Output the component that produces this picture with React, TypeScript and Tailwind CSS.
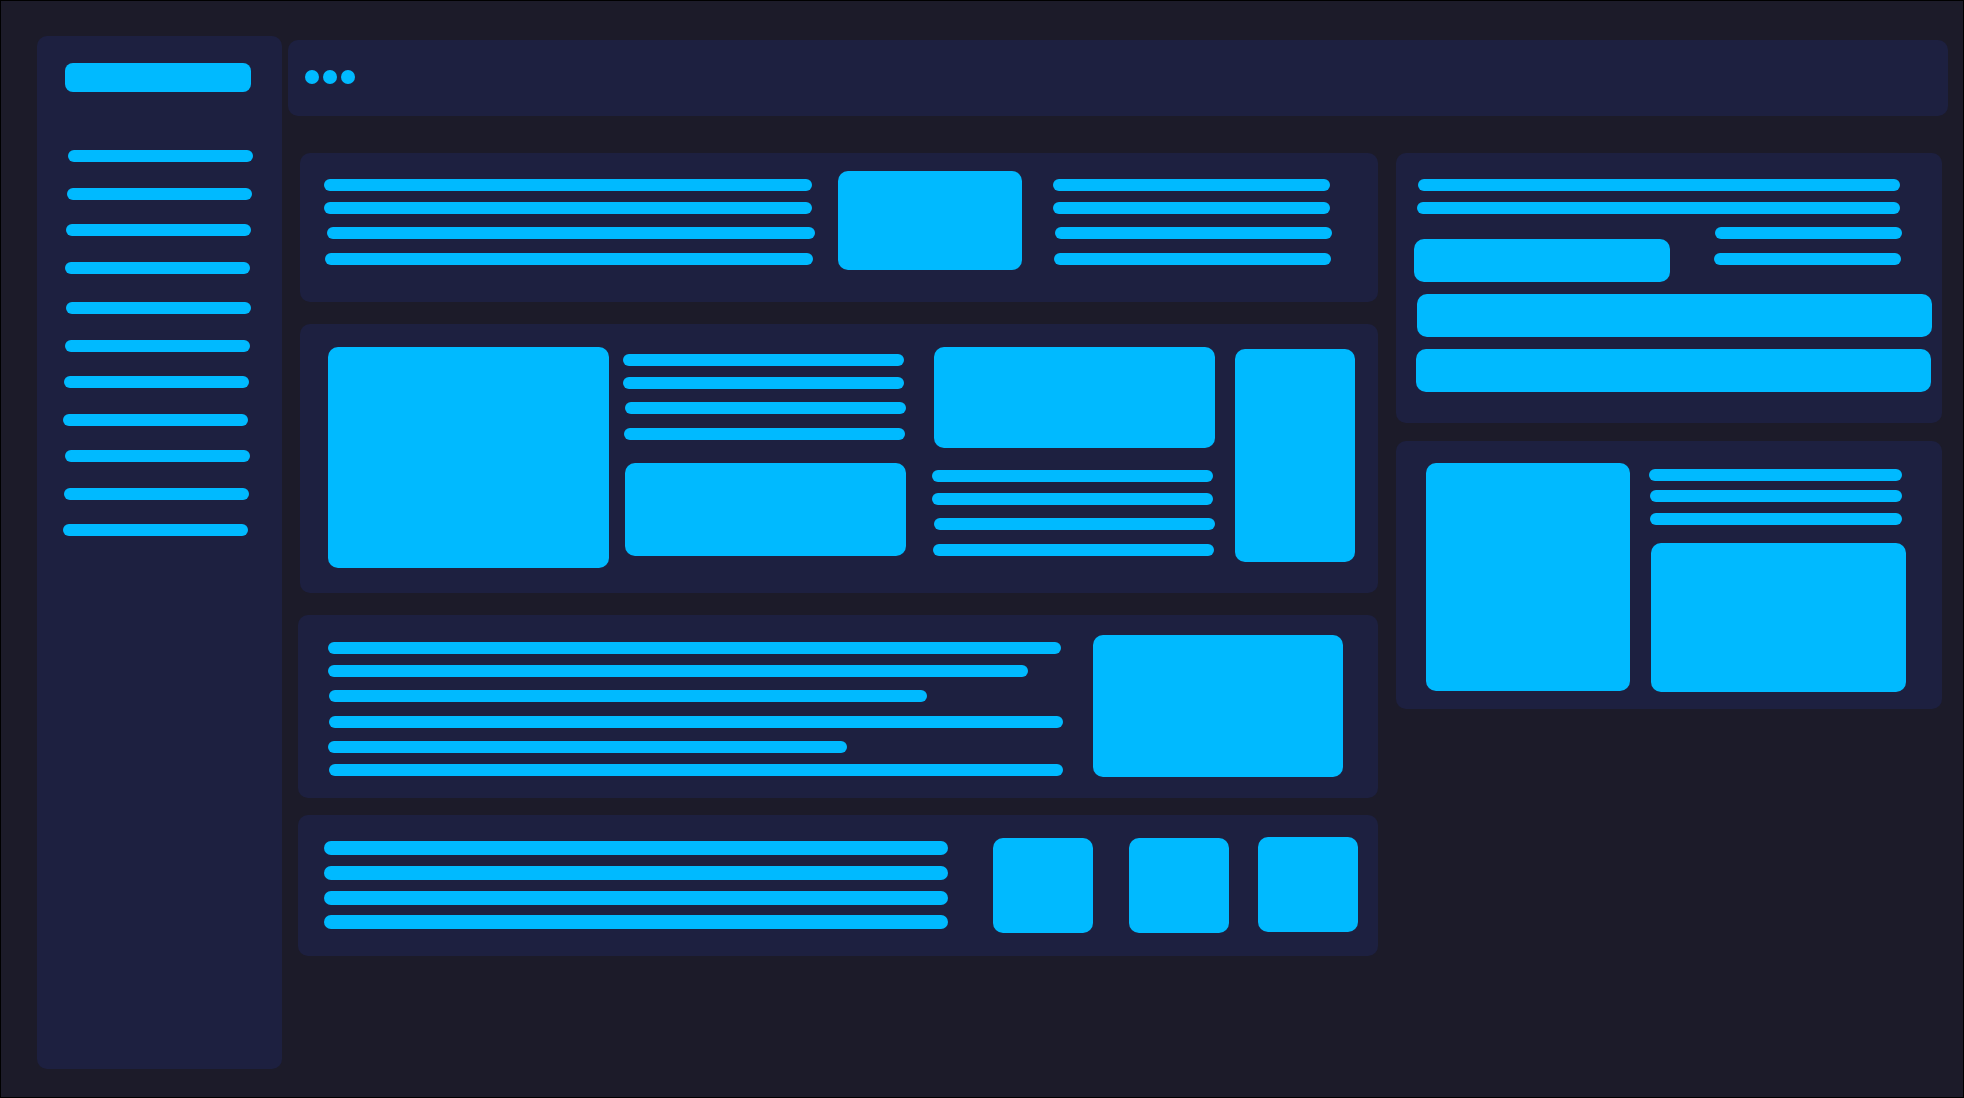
import React from "react";

const Line = ({ className = "" }: { className?: string }) => (
    <div className={`h-[12px] shrink-0 rounded-full bg-[#00baff] ${className}`} />
)

const Box = ({ className = "" }: { className?: string }) => (
    <div className={`shrink-0 rounded-[10px] bg-[#00baff] ${className}`} />
)

const navLines = [
    "mt-[58px] ml-[31px]",
    "mt-[26px] ml-[30px]",
    "mt-[24px] ml-[29px]",
    "mt-[26px] ml-[28px]",
    "mt-[28px] ml-[29px]",
    "mt-[26px] ml-[28px]",
    "mt-[24px] ml-[27px]",
    "mt-[26px] ml-[26px]",
    "mt-[24px] ml-[28px]",
    "mt-[26px] ml-[27px]",
    "mt-[24px] ml-[26px]",
]

function Sidebar() {
    return (
        <div className="ml-[36px] mt-[35px] flex h-[1033px] w-[245px] shrink-0 flex-col rounded-[10px] bg-[#1d2040]">
            <div className="ml-[28px] mt-[27px] h-[29px] w-[186px] rounded-[8px] bg-[#00baff]" />
            {navLines.map((cls, i) => (
                <Line key={i} className={`w-[185px] ${cls}`} />
            ))}
        </div>
    )
}

function Header() {
    return (
        <div className="flex h-[76px] w-[1660px] items-start gap-[4px] rounded-[10px] bg-[#1d2040] pl-[17px] pt-[30px]">
            <div className="h-[14px] w-[14px] rounded-full bg-[#00baff]" />
            <div className="h-[14px] w-[14px] rounded-full bg-[#00baff]" />
            <div className="h-[14px] w-[14px] rounded-full bg-[#00baff]" />
        </div>
    )
}

function CardOne() {
    return (
        <div className="flex h-[149px] w-[1078px] items-start rounded-[10px] bg-[#1d2040]">
            <div className="ml-[24px] mt-[26px] flex flex-col">
                <Line className="w-[488px]" />
                <Line className="mt-[11px] w-[488px]" />
                <Line className="ml-[3px] mt-[13px] w-[488px]" />
                <Line className="ml-[1px] mt-[14px] w-[488px]" />
            </div>
            <Box className="ml-[23px] mt-[18px] h-[99px] w-[184px]" />
            <div className="ml-[31px] mt-[26px] flex flex-col">
                <Line className="w-[277px]" />
                <Line className="mt-[11px] w-[277px]" />
                <Line className="ml-[2px] mt-[13px] w-[277px]" />
                <Line className="ml-[1px] mt-[14px] w-[277px]" />
            </div>
        </div>
    )
}

function CardTwo() {
    return (
        <div className="mt-[22px] flex h-[269px] w-[1078px] items-start rounded-[10px] bg-[#1d2040]">
            <Box className="ml-[28px] mt-[23px] h-[221px] w-[281px]" />
            <div className="ml-[14px] mt-[30px] flex flex-col">
                <Line className="w-[281px]" />
                <Line className="mt-[11px] w-[281px]" />
                <Line className="ml-[2px] mt-[13px] w-[281px]" />
                <Line className="ml-[1px] mt-[14px] w-[281px]" />
                <Box className="ml-[2px] mt-[23px] h-[93px] w-[281px]" />
            </div>
            <div className="ml-[26px] mt-[23px] flex flex-col">
                <Box className="ml-[2px] h-[101px] w-[281px]" />
                <Line className="mt-[22px] w-[281px]" />
                <Line className="mt-[11px] w-[281px]" />
                <Line className="ml-[2px] mt-[13px] w-[281px]" />
                <Line className="ml-[1px] mt-[14px] w-[281px]" />
            </div>
            <Box className="ml-[20px] mt-[25px] h-[213px] w-[120px]" />
        </div>
    )
}

function CardThree() {
    return (
        <div className="-ml-[2px] mt-[22px] flex h-[183px] w-[1080px] items-start rounded-[10px] bg-[#1d2040]">
            <div className="ml-[30px] mt-[27px] flex flex-col">
                <Line className="w-[733px]" />
                <Line className="mt-[11px] w-[700px]" />
                <Line className="ml-[1px] mt-[13px] w-[598px]" />
                <Line className="ml-[1px] mt-[14px] w-[734px]" />
                <Line className="mt-[13px] w-[519px]" />
                <Line className="ml-[1px] mt-[11px] w-[734px]" />
            </div>
            <Box className="ml-[30px] mt-[20px] h-[142px] w-[250px]" />
        </div>
    )
}

function CardFour() {
    return (
        <div className="-ml-[2px] mt-[17px] flex h-[141px] w-[1080px] items-start rounded-[10px] bg-[#1d2040]">
            <div className="ml-[26px] mt-[26px] flex flex-col">
                <Line className="h-[14px] w-[624px]" />
                <Line className="mt-[11px] h-[14px] w-[624px]" />
                <Line className="mt-[11px] h-[14px] w-[624px]" />
                <Line className="mt-[10px] h-[14px] w-[624px]" />
            </div>
            <Box className="ml-[45px] mt-[23px] h-[95px] w-[100px]" />
            <Box className="ml-[36px] mt-[23px] h-[95px] w-[100px]" />
            <Box className="ml-[29px] mt-[22px] h-[95px] w-[100px]" />
        </div>
    )
}

function SideCardOne() {
    return (
        <div className="flex h-[270px] w-[546px] flex-col rounded-[10px] bg-[#1d2040]">
            <Line className="ml-[22px] mt-[26px] w-[482px]" />
            <Line className="ml-[21px] mt-[11px] w-[483px]" />
            <div className="mt-[13px] flex items-start">
                <Box className="ml-[18px] mt-[12px] h-[43px] w-[256px]" />
                <div className="ml-[44px] flex flex-col">
                    <Line className="ml-[1px] w-[187px]" />
                    <Line className="mt-[14px] w-[187px]" />
                </div>
            </div>
            <Box className="ml-[21px] mt-[12px] h-[43px] w-[515px]" />
            <Box className="ml-[20px] mt-[12px] h-[43px] w-[515px]" />
        </div>
    )
}

function SideCardTwo() {
    return (
        <div className="mt-[18px] flex h-[268px] w-[546px] items-start rounded-[10px] bg-[#1d2040]">
            <Box className="ml-[30px] mt-[22px] h-[228px] w-[204px]" />
            <div className="ml-[19px] mt-[28px] flex flex-col">
                <Line className="w-[253px]" />
                <Line className="ml-[1px] mt-[9px] w-[252px]" />
                <Line className="ml-[1px] mt-[11px] w-[252px]" />
                <Box className="ml-[2px] mt-[18px] h-[149px] w-[255px]" />
            </div>
        </div>
    )
}

export default function App() {
    return (
        <div className="flex h-[1098px] w-[1964px] items-start overflow-hidden border border-black bg-[#1c1b29]">
            <Sidebar />
            <div className="ml-[6px] mt-[39px] flex flex-col">
                <Header />
                <div className="mt-[37px] flex items-start gap-[18px] pl-[12px]">
                    <div className="flex flex-col">
                        <CardOne />
                        <CardTwo />
                        <CardThree />
                        <CardFour />
                    </div>
                    <div className="flex flex-col">
                        <SideCardOne />
                        <SideCardTwo />
                    </div>
                </div>
            </div>
        </div>
    )
}
